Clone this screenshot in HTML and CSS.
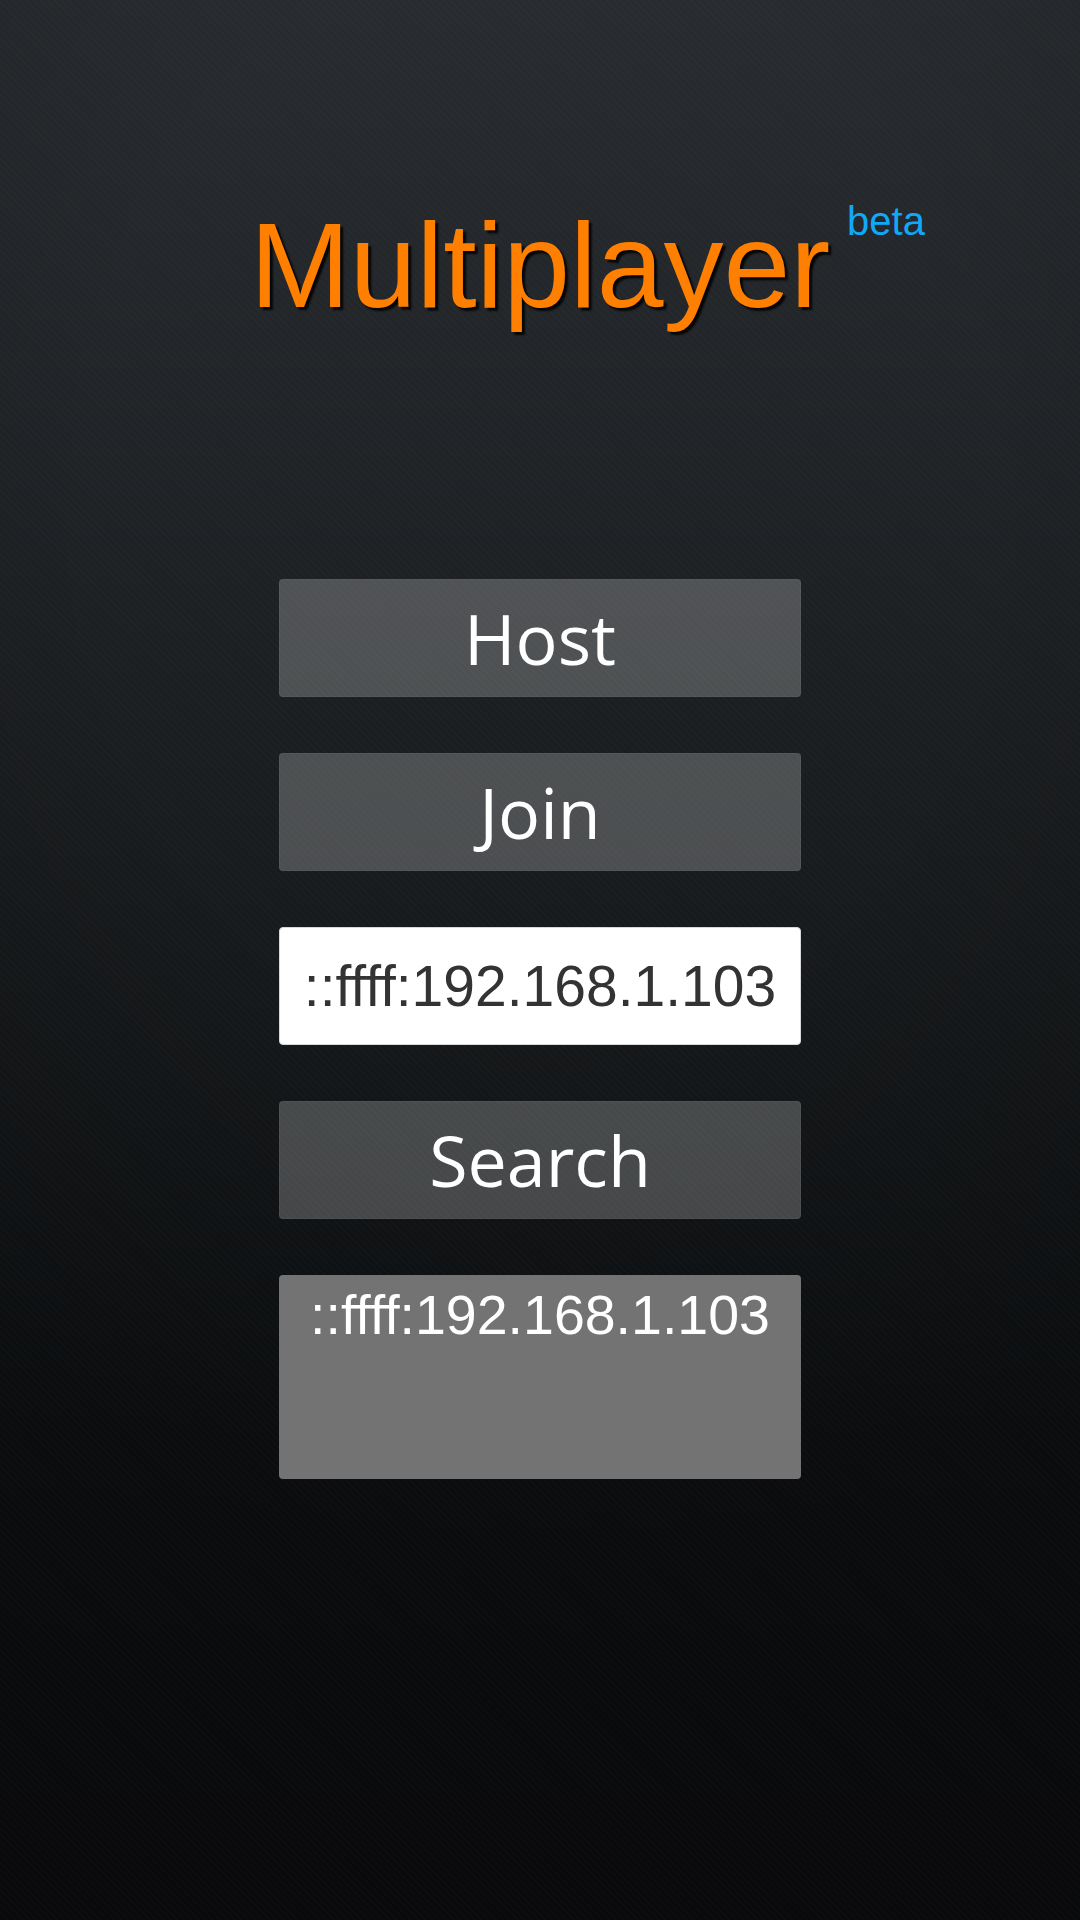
FILE: index.html
```html
<!DOCTYPE html>
<html lang="en">
<head>
  <meta charset="UTF-8">
  <title>Multiplayer</title>
  <link rel="stylesheet" href="styles.css">
</head>
<body>
  <div class="screen">
    <h1 class="title">
      <span class="title-text">Multiplayer<span class="beta">beta</span></span>
    </h1>
    <div class="menu">
      <button class="btn">Host</button>
      <button class="btn">Join</button>
      <input class="address" type="text" value="::ffff:192.168.1.103">
      <button class="btn">Search</button>
      <div class="servers">
        <div class="server">::ffff:192.168.1.103</div>
      </div>
    </div>
  </div>
</body>
</html>
```

FILE: styles.css
```css
body, html {
  margin: 0;
  padding: 0;
  height: 100%;
  font-family: "Liberation Sans", Arial, sans-serif;
}
body {
  background-color: #0b0c0e;
  background-image:
    repeating-linear-gradient(45deg, rgba(255,255,255,0.012) 0 2px, rgba(0,0,0,0) 2px 5px),
    radial-gradient(ellipse 90% 60% at 50% 25%, rgba(0,0,0,0) 45%, rgba(0,0,0,0.22) 100%),
    linear-gradient(to bottom, #282c30 0%, #1e2124 30%, #15181a 55%, #0d0f11 75%, #0b0c0e 100%);
}
.screen {
  min-height: 1920px;
  display: flex;
  flex-direction: column;
  align-items: center;
}
.title {
  margin: 195px 0 0;
  font-weight: normal;
  text-align: center;
  line-height: 140px;
  height: 140px;
}
.title-text {
  position: relative;
  display: inline-block;
  font-size: 120px;
  color: #ff7f00;
  text-shadow: 3px 3px 2px rgba(0,0,0,0.85);
}
.beta {
  position: absolute;
  left: 100%;
  top: 6px;
  margin-left: 17px;
  font-size: 40px;
  line-height: 40px;
  color: #10a8f8;
  text-shadow: none;
}
.menu {
  margin-top: 244px;
  width: 522px;
  display: flex;
  flex-direction: column;
  gap: 56px;
}
.btn {
  height: 118px;
  margin: 0;
  padding: 0;
  border: 1px solid rgba(255,255,255,0.04);
  border-radius: 4px;
  background: rgba(255,255,255,0.225);
  color: #fff;
  font-family: "Open Sans", "Noto Sans", sans-serif;
  font-size: 70px;
  line-height: 1;
}
.address {
  box-sizing: border-box;
  height: 118px;
  margin: 0;
  padding: 0 10px;
  border: 1px solid #d8d8d8;
  border-radius: 4px;
  background: #fff;
  color: #333;
  font-family: "Liberation Sans", Arial, sans-serif;
  font-size: 57px;
  text-align: center;
  outline: none;
}
.servers {
  height: 204px;
  box-sizing: border-box;
  padding-top: 8px;
  border-radius: 4px;
  background: #737373;
}
.server {
  color: #fff;
  font-size: 55.5px;
  text-align: center;
}
```
